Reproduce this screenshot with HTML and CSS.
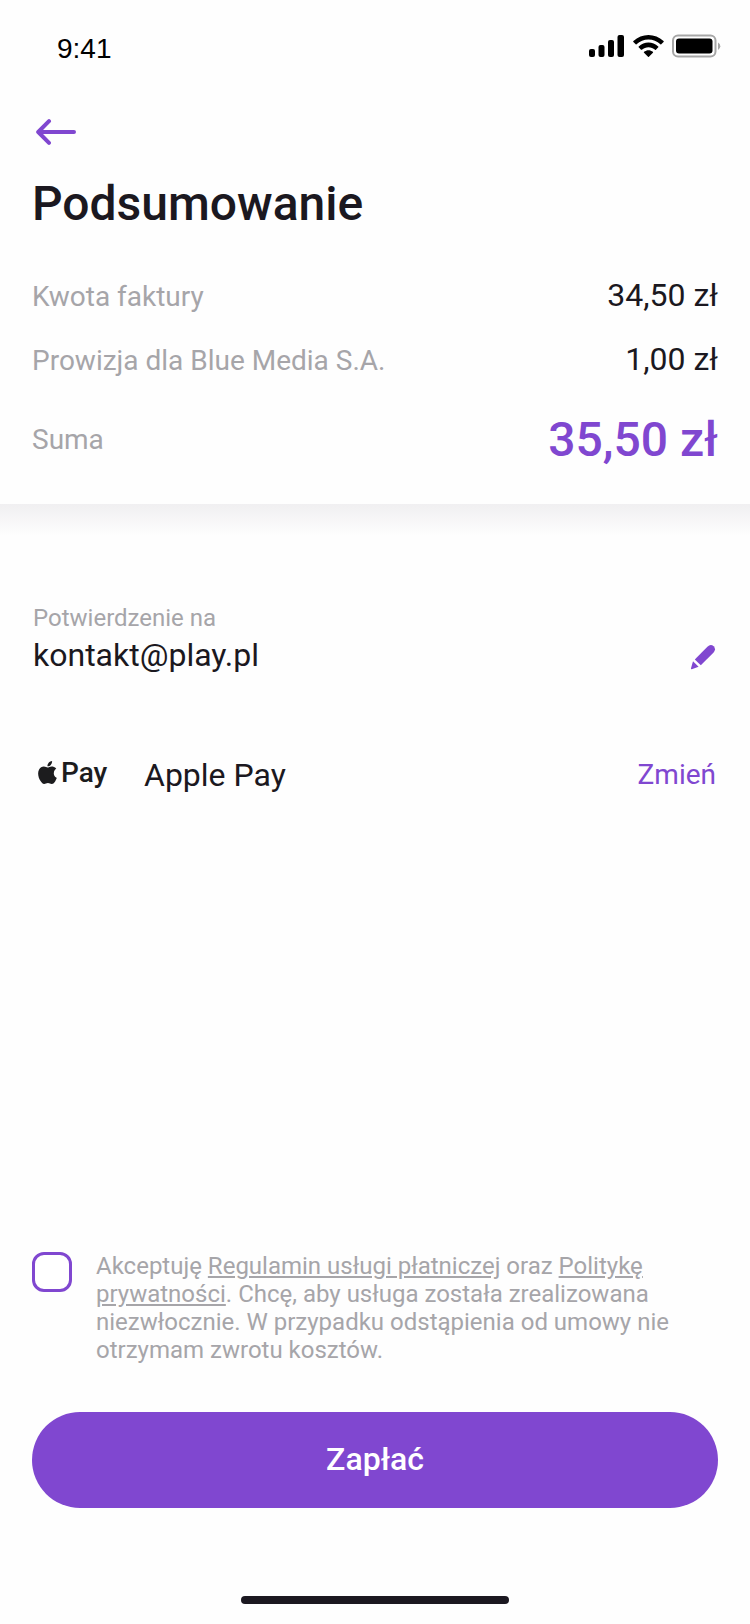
FILE: index.html
```
<!DOCTYPE html>
<html lang="pl">
<head>
  <meta charset="utf-8">
  <meta name="viewport" content="width=device-width, initial-scale=1">
  <title>Podsumowanie</title>
  <link rel="stylesheet" href="styles.css">
</head>
<body>
  <div class="screen">
    <div class="status-bar">
      <span class="status-time">9:41</span>
      <div class="status-icons">
        <svg width="36" height="24" viewBox="0 0 36 24" aria-hidden="true">
          <rect x="0" y="15" width="6" height="8" rx="2"/>
          <rect x="9.500" y="11" width="6" height="12" rx="2"/>
          <rect x="19" y="6" width="6" height="17" rx="2"/>
          <rect x="28.500" y="1" width="6.500" height="22" rx="2"/>
        </svg>
        <svg width="31" height="22" viewBox="0 0 15.300 11" aria-hidden="true">
          <path d="M7.637 2.277c2.216 0 4.347.852 5.953 2.379.12.118.314.116.433-.004l1.156-1.166a.32.32 0 0 0-.003-.456C10.961-1.01 4.311-1.01.096 3.030a.32.32 0 0 0-.003.456l1.157 1.166c.119.12.312.122.433.004 1.606-1.527 3.737-2.379 5.954-2.379zM7.637 6.073c1.217 0 2.391.453 3.294 1.270a.306.306 0 0 0 .433-.006l1.155-1.167a.324.324 0 0 0-.005-.459c-2.748-2.556-7.004-2.556-9.752 0a.324.324 0 0 0-.005.459l1.155 1.167c.119.119.311.121.433.006.902-.817 2.075-1.270 3.292-1.270zM9.950 8.627a.313.313 0 0 1-.093.230L7.860 10.873a.312.312 0 0 1-.444 0L5.418 8.857a.313.313 0 0 1 .010-.457c1.276-1.086 3.144-1.086 4.419 0a.313.313 0 0 1 .103.227z"/>
        </svg>
        <svg width="50" height="24" viewBox="0 0 50 24" aria-hidden="true">
          <rect x="1" y="1.500" width="42.500" height="21" rx="5" fill="none" stroke="#a6a6a6" stroke-width="2"/>
          <rect x="4" y="4.500" width="36.500" height="15" rx="3"/>
          <path d="M46 8.500v7.500a4.200 4.200 0 0 0 0-7.500z" fill="#a6a6a6"/>
        </svg>
      </div>
    </div>

    <header class="summary">
      <button class="back-button" type="button" aria-label="Wstecz">
        <svg width="40" height="26" viewBox="0 0 40 26" fill="none" stroke="currentColor" stroke-width="4" stroke-linecap="round" stroke-linejoin="round" aria-hidden="true">
          <path d="M2.500 13H38M13 2.200L2.200 13 13 23.800"/>
        </svg>
      </button>
      <h1 class="title">Podsumowanie</h1>
      <dl class="costs">
        <div class="cost-row">
          <dt class="cost-label">Kwota faktury</dt>
          <dd class="cost-value">34,50 zł</dd>
        </div>
        <div class="cost-row">
          <dt class="cost-label">Prowizja dla Blue Media S.A.</dt>
          <dd class="cost-value">1,00 zł</dd>
        </div>
        <div class="cost-row cost-total">
          <dt class="cost-label">Suma</dt>
          <dd class="cost-value">35,50 zł</dd>
        </div>
      </dl>
    </header>

    <main class="details">
      <section class="contact">
        <p class="contact-label">Potwierdzenie na</p>
        <div class="detail-row">
          <span class="detail-value">kontakt@play.pl</span>
          <button class="edit-button" type="button" aria-label="Edytuj adres">
            <svg width="26" height="26" viewBox="0 0 26 26" fill="currentColor" aria-hidden="true">
              <path d="M4.800 15.500L17.400 2.700Q20.600-.3 23.700 2.300 26.400 5.500 23.400 8.700L10.800 21.300z"/>
              <path d="M3 17.200L8.600 22.700 1.800 25.200Q.8 25.300 1 24.300z"/>
            </svg>
          </button>
        </div>
      </section>
      <section class="detail-row">
        <span class="method-logo">
          <svg width="19" height="23" viewBox="2.200 0 19.600 24" fill="currentColor" aria-hidden="true">
            <path d="M12.152 6.896c-.948 0-2.415-1.078-3.960-1.040-2.040.027-3.910 1.183-4.961 3.014-2.117 3.675-.546 9.103 1.519 12.090 1.013 1.454 2.208 3.090 3.792 3.039 1.520-.065 2.090-.987 3.935-.987 1.831 0 2.350.987 3.960.948 1.637-.026 2.676-1.480 3.676-2.948 1.156-1.688 1.636-3.325 1.662-3.415-.039-.013-3.182-1.221-3.220-4.857-.026-3.040 2.480-4.494 2.597-4.559-1.429-2.090-3.623-2.324-4.390-2.376-2-.156-3.675 1.090-4.610 1.090zM15.530 3.830c.843-1.012 1.400-2.427 1.245-3.830-1.207.052-2.662.805-3.532 1.818-.780.896-1.454 2.338-1.273 3.714 1.338.104 2.715-.688 3.559-1.701"/>
          </svg>
          <span class="method-name">Pay</span>
        </span>
        <span class="detail-value">Apple Pay</span>
        <button class="change-button" type="button">Zmień</button>
      </section>
    </main>

    <form class="payment">
      <div class="consent">
        <input class="consent-box" type="checkbox" id="consent">
        <label class="consent-text" for="consent">Akceptuję <a class="consent-link" href="#regulamin">Regulamin usługi płatniczej</a> oraz <a class="consent-link" href="#prywatnosc">Politykę prywatności</a>. Chcę, aby usługa została zrealizowana niezwłocznie. W przypadku odstąpienia od umowy nie otrzymam zwrotu kosztów.</label>
      </div>
      <button class="pay-button" type="button">Zapłać</button>
    </form>
    <div class="home-indicator"></div>
  </div>
</body>
</html>
```

FILE: styles.css
```
:root {
  --purple: #8047d0;
  --ink: #1b1820;
  --muted: #a6a5a9;
  --side: 32px;
}

* {
  box-sizing: border-box;
}

body {
  margin: 0;
  background: #fefefe;
  color: var(--ink);
  font-family: Roboto, "Noto Sans", sans-serif;
}

button {
  padding: 0;
  border: 0;
  background: none;
  color: var(--purple);
  font: inherit;
  cursor: pointer;
}

svg {
  display: block;
}

h1,
p,
dl,
dd {
  margin: 0;
}

.screen {
  display: flex;
  flex-direction: column;
  min-height: 100vh;
  padding-bottom: 20px;
}

.status-bar {
  display: flex;
  align-items: center;
  justify-content: space-between;
  height: 92px;
  padding: 0 28px 0 57px;
  color: #000;
}

.status-time {
  padding-top: 6px;
  font-family: "Liberation Sans", Arial, sans-serif;
  font-size: 28px;
  line-height: 36px;
}

.status-icons {
  display: flex;
  align-items: center;
  gap: 8px;
}

.summary {
  padding: 24px var(--side) 36px;
}

.back-button {
  display: block;
  padding: 3px 4px;
}

.title {
  margin-top: 28px;
  font-size: 48px;
  font-weight: 500;
  line-height: 56px;
}

.costs {
  display: flex;
  flex-direction: column;
  gap: 24px;
  margin-top: 43px;
}

.cost-row {
  display: flex;
  align-items: baseline;
  justify-content: space-between;
}

.cost-label {
  color: var(--muted);
  font-size: 28px;
  line-height: 32px;
}

.cost-value {
  font-size: 32px;
  line-height: 40px;
}

.cost-total {
  align-items: center;
  margin-top: 9px;
}

.cost-total .cost-value {
  color: var(--purple);
  font-size: 48px;
  font-weight: 500;
  line-height: 56px;
}

.details {
  display: flex;
  flex-direction: column;
  gap: 80px;
  padding: 100px 34px 48px 33px;
  background: linear-gradient(#f0eff1, #fefefe 32px);
}

.contact {
  display: flex;
  flex-direction: column;
  gap: 3px;
}

.contact-label {
  color: var(--muted);
  font-size: 24px;
  line-height: 28px;
}

.detail-row {
  display: flex;
  align-items: center;
}

.detail-value {
  flex: 1;
  font-size: 32px;
  line-height: 40px;
}

.edit-button {
  padding-top: 4px;
}

.method-logo {
  display: flex;
  align-items: center;
  gap: 4px;
  width: 111px;
  padding: 0 0 6px 5px;
  color: #1c1c1e;
  font-size: 28px;
  font-weight: 500;
  line-height: 32px;
}

.method-name {
  padding-top: 2px;
}

.change-button {
  font-size: 28px;
  line-height: 32px;
}

.payment {
  display: flex;
  flex-direction: column;
  gap: 48px;
  margin-top: auto;
  padding: 0 var(--side) 88px;
}

.consent {
  display: flex;
  align-items: flex-start;
  gap: 24px;
}

.consent-box {
  flex: none;
  width: 40px;
  height: 40px;
  margin: 0;
  border: 3px solid var(--purple);
  border-radius: 12px;
  background: #fff;
  appearance: none;
}

.consent-box:checked {
  background: var(--purple);
}

.consent-text {
  color: var(--muted);
  font-size: 24px;
  line-height: 28px;
}

.consent-link {
  color: inherit;
}

.pay-button {
  height: 96px;
  padding-bottom: 2px;
  border-radius: 48px;
  background: var(--purple);
  color: #fff;
  font-size: 32px;
  font-weight: 500;
  line-height: 40px;
}

.home-indicator {
  align-self: center;
  width: 268px;
  height: 8px;
  border-radius: 4px;
  background: var(--ink);
}
```
